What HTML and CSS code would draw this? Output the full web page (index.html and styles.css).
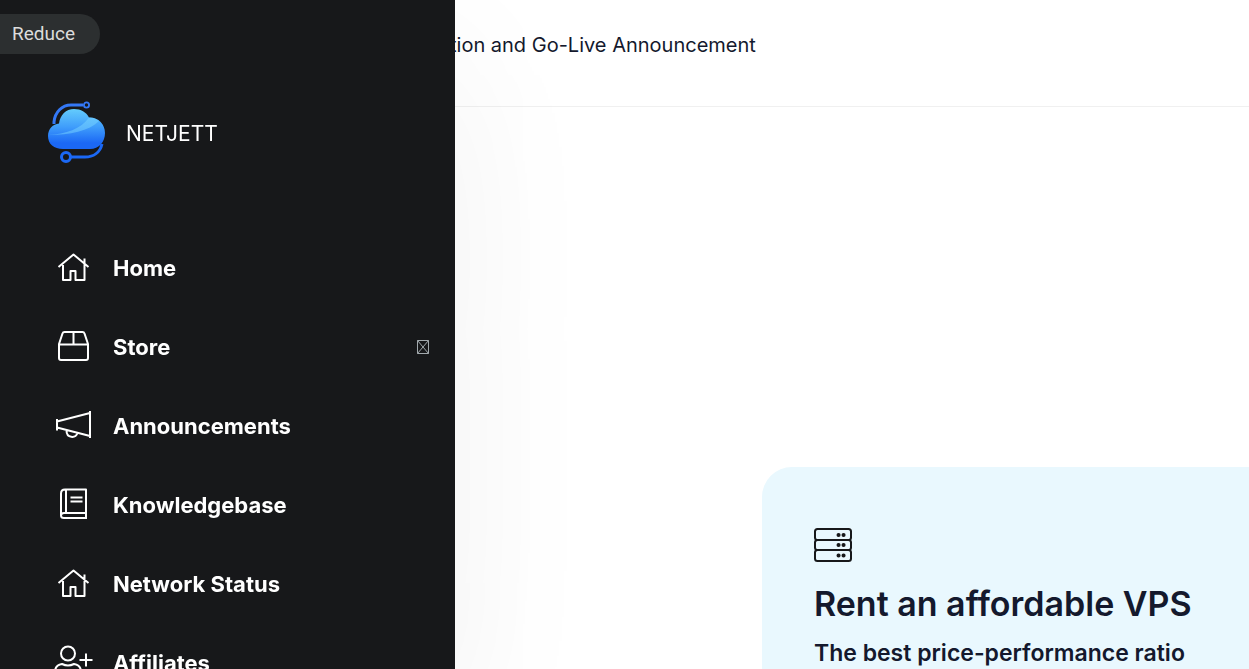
FILE: index.html
```html
<!DOCTYPE html>
<html lang="en">
<head>
    <meta charset="UTF-8">
    <meta name="viewport" content="width=device-width, initial-scale=1.0">
    <title>NETJETT</title>
    <link rel="stylesheet" href="styles.css">
</head>
<body>

    <aside class="sidebar">
        <button type="button" class="reduce-btn">Reduce</button>

        <a href="#" class="brand">
            <svg class="brand-logo" viewBox="0 0 60 64" aria-hidden="true">
                <defs>
                    <linearGradient id="cloud" x1="0" y1="0" x2="0" y2="1">
                        <stop offset="0" stop-color="#64ccfc"/>
                        <stop offset="0.45" stop-color="#3f9dfb"/>
                        <stop offset="0.85" stop-color="#1b68f5"/>
                        <stop offset="1" stop-color="#1b68f5"/>
                    </linearGradient>
                    <linearGradient id="shine" x1="0" y1="1" x2="1" y2="0">
                        <stop offset="0" stop-color="#74d0ff" stop-opacity="0.5"/>
                        <stop offset="1" stop-color="#74d0ff" stop-opacity="0.6"/>
                    </linearGradient>
                </defs>
                <path d="M6 23v-2C7 11 14 4 23 4h12" fill="none" stroke="#3478f6" stroke-width="3"/>
                <circle cx="38.500" cy="4" r="2.600" fill="none" stroke="#3478f6" stroke-width="1.800"/>
                <path d="M15 48C6 48 0 43 0 35c0-7 5-12 11-12.500C12 14 18 8 26 8c7 0 12 3 15 8.500C50 16 57 23 57 32c0 9-6 16-15 16z" fill="url(#cloud)"/>
                <path d="M0 34C18 33 33 28 41 16.500c4 0 7 1 10 3.500C41 30 22 34 0 34z" fill="url(#shine)"/>
                <path d="M23 56h14c8 0 15-4 17-13" fill="none" stroke="#1b68f5" stroke-width="3"/>
                <circle cx="18" cy="56" r="4.500" fill="none" stroke="#1b68f5" stroke-width="3"/>
            </svg>
            <span>NETJETT</span>
        </a>

        <nav class="menu">
            <a href="#" class="menu-item">
                <svg class="menu-icon" viewBox="0 0 36 36" aria-hidden="true">
                    <path d="M3.500 17L18.500 4.500l15 12.500M8 15V30H15.500V21h5v9h9V8.500"/>
                </svg>
                <span>Home</span>
            </a>
            <a href="#" class="menu-item">
                <svg class="menu-icon" viewBox="0 0 36 36" aria-hidden="true">
                    <path d="M9.500 3h18q1.500 0 2 1.500L33 15v14q0 2-2 2H6q-2 0-2-2V15L7.500 4.500Q8 3 9.500 3zM4 15.500h29M18.500 3v12"/>
                </svg>
                <span>Store</span>
                <svg class="menu-arrow" viewBox="0 0 12 16" aria-hidden="true">
                    <path d="M.5 1.500h11v13H.5zM.5 1.500l11 13M11.500 1.500L.5 14.500"/>
                </svg>
            </a>
            <a href="#" class="menu-item">
                <svg class="menu-icon" viewBox="0 0 36 36" aria-hidden="true">
                    <path d="M2 11v11.500M35 3v27M2 13.500L35 5M2 19.500l33 8.500M11.500 22.500c0 8 9 8 11 2.500"/>
                </svg>
                <span>Announcements</span>
            </a>
            <a href="#" class="menu-item">
                <svg class="menu-icon" viewBox="0 0 36 36" aria-hidden="true">
                    <path d="M31 26V2.500H10Q6 2.500 6 6.500v22M31 26H9q-3 0-3 2.500T9 31h23M31 26v5M11 3v23M15.500 10.500h12M15.500 14.500h12"/>
                </svg>
                <span>Knowledgebase</span>
            </a>
            <a href="#" class="menu-item">
                <svg class="menu-icon" viewBox="0 0 36 36" aria-hidden="true">
                    <path d="M3.500 17L18.500 4.500l15 12.500M8 15V30H15.500V21h5v9h9V8.500"/>
                </svg>
                <span>Network Status</span>
            </a>
            <a href="#" class="menu-item">
                <svg class="menu-icon" viewBox="0 0 36 36" aria-hidden="true">
                    <circle cx="13" cy="8.500" r="7"/>
                    <path d="M0 30v-3q0-7 7-8 6 3 12 0 7 1 7 8v3M24.500 15h13M31 8.500v13"/>
                </svg>
                <span>Affiliates</span>
            </a>
        </nav>
    </aside>

    <header class="announcement">
        <a href="#">tion and Go-Live Announcement</a>
    </header>

    <main class="content">
        <section class="card">
            <svg class="card-icon" viewBox="0 0 38 36" aria-hidden="true">
                <rect x="1" y="2" width="36" height="11" rx="2.500"/>
                <rect x="1" y="13" width="36" height="10" rx="2.500"/>
                <rect x="1" y="23" width="36" height="11" rx="2.500"/>
                <path class="lights" d="M24.500 8h.1M29.500 8h.1M24.500 18h.1M29.500 18h.1M24.500 28.500h.1M29.500 28.500h.1"/>
            </svg>
            <h2>Rent an affordable VPS</h2>
            <h3>The best price-performance ratio</h3>
        </section>
    </main>

</body>
</html>
```
FILE: styles.css
```css
* {
    box-sizing: border-box;
}

body {
    font-family: Inter, sans-serif;
    background-color: #fff;
    color: #14192d;
    margin: 0;
    height: 100vh;
    overflow: hidden;
}

a {
    color: inherit;
    text-decoration: none;
}

/* Drawer that opens over the page */
.sidebar {
    position: fixed;
    top: 0;
    bottom: 0;
    left: 0;
    z-index: 10;
    width: 455px;
    padding-top: 14px;
    overflow: hidden;
    background-color: #17181a;
    color: #fff;
    box-shadow: 0 60px 160px rgba(0, 0, 0, 0.06);
}

.reduce-btn {
    display: block;
    height: 40px;
    padding: 0 25px 2px 12px;
    border: none;
    border-radius: 0 20px 20px 0;
    background-color: #2c2f30;
    color: #dcdcdc;
    font-family: Roboto, sans-serif;
    font-size: 19px;
    font-weight: 400;
    cursor: pointer;
}

.brand {
    display: flex;
    align-items: center;
    gap: 18px;
    margin-top: 47px;
    padding-left: 48px;
    font-size: 21px;
}

.brand-logo {
    width: 60px;
    height: 64px;
}

.menu {
    margin-top: 63px;
    padding: 0 26px 0 55px;
}

.menu-item {
    display: flex;
    align-items: center;
    height: 79px;
    font-size: 22px;
    font-weight: 700;
}

.menu-icon {
    width: 36px;
    height: 36px;
    margin-right: 22px;
    overflow: visible;
    fill: none;
    stroke: #fff;
    stroke-width: 2;
    stroke-linejoin: round;
}

.menu-arrow {
    width: 12px;
    height: 16px;
    margin-left: auto;
    fill: none;
    stroke: #a2a9ad;
    stroke-width: 1;
}

.announcement {
    display: flex;
    align-items: center;
    height: 107px;
    padding: 0 0 17px 450px;
    border-bottom: 1px solid #f0f0f0;
    font-size: 20px;
    font-weight: 400;
}

.content {
    padding: 360px 0 0 762px;
}

.card {
    padding: 60px 52px;
    border-radius: 30px 0 0 0;
    background-color: #e9f8fe;
    white-space: nowrap;
}

.card-icon {
    display: block;
    width: 38px;
    height: 36px;
    fill: none;
    stroke: #17181a;
    stroke-width: 2;
}

.card-icon .lights {
    stroke-width: 4;
    stroke-linecap: round;
}

.card h2 {
    margin: 16px 0 8px;
    font-size: 34px;
    font-weight: 600;
    line-height: 50px;
}

.card h3 {
    margin: 0;
    font-size: 23px;
    font-weight: 600;
    line-height: 32px;
}
```
